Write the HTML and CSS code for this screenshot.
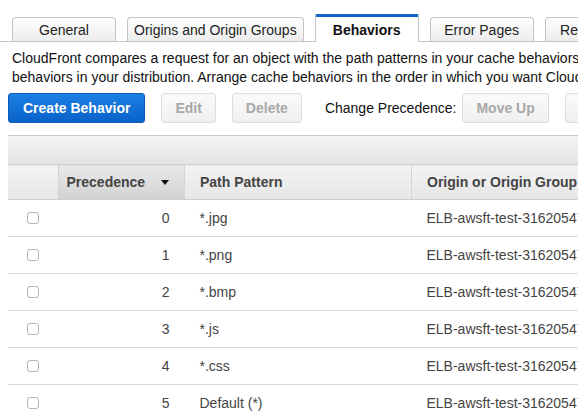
FILE: index.html
```html
<!DOCTYPE html>
<html lang="en">
<head>
  <meta charset="UTF-8">
  <title>CloudFront Distribution - Behaviors</title>
  <link rel="stylesheet" href="styles.css">
</head>
<body>

  <div class="tabs">
    <div class="tab">General</div>
    <div class="tab">Origins and Origin Groups</div>
    <div class="tab active">Behaviors</div>
    <div class="tab">Error Pages</div>
    <div class="tab">Restrictions</div>
    <div class="tab">Invalidations</div>
    <div class="tab">Tags</div>
  </div>

  <p class="intro">
    CloudFront compares a request for an object with the path patterns in your cache behaviors based on the order of the cache<br>
    behaviors in your distribution. Arrange cache behaviors in the order in which you want CloudFront to evaluate them.
  </p>

  <div class="toolbar">
    <button class="btn primary">Create Behavior</button>
    <button class="btn" disabled>Edit</button>
    <button class="btn" disabled>Delete</button>
    <span class="label">Change Precedence:</span>
    <button class="btn" disabled>Move Up</button>
    <button class="btn" disabled>Move Down</button>
  </div>

  <div class="table-wrap">
    <div class="table-top"></div>
    <table id="behaviors">
      <thead>
        <tr>
          <th class="col-check"></th>
          <th class="col-prec sorted">Precedence <span class="caret"></span></th>
          <th class="col-path">Path Pattern</th>
          <th class="col-origin">Origin or Origin Group</th>
          <th class="col-policy">Viewer Protocol Policy</th>
        </tr>
      </thead>
      <tbody></tbody>
    </table>
  </div>

  <script>
    const behaviors = ["*.jpg", "*.png", "*.bmp", "*.js", "*.css", "Default (*)"];
    const tbody = document.querySelector("#behaviors tbody");

    behaviors.forEach((pattern, i) => {
      const tr = document.createElement("tr");
      tr.innerHTML =
        '<td class="col-check"><input type="checkbox"></td>' +
        '<td class="num">' + i + '</td>' +
        '<td>' + pattern + '</td>' +
        '<td>ELB-awsft-test-316205472.us-east-1.elb.amazonaws.com</td>' +
        '<td>HTTP and HTTPS</td>';
      tbody.appendChild(tr);
    });
  </script>

</body>
</html>
```

FILE: styles.css
```css
html {
  overflow: hidden;
}
body {
  margin: 0;
  width: 1100px;
  font-family: "Liberation Sans", Arial, sans-serif;
  font-size: 14px;
  color: #333;
  background: #fff;
}

/* tabs */
.tabs {
  display: flex;
  align-items: flex-end;
  gap: 11px;
  padding: 14px 0 0 12px;
  border-bottom: 1px solid #c4c4c4;
  height: 27px;
}
.tab {
  box-sizing: border-box;
  min-width: 104px;
  height: 24px;
  padding: 4px 6px 0;
  text-align: center;
  color: #222;
  border: 1px solid #c4c4c4;
  border-bottom: none;
  border-radius: 4px 4px 0 0;
  background: linear-gradient(to bottom, #fff, #ececec);
}
.tab.active {
  height: 28px;
  margin-bottom: -1px;
  padding-top: 5px;
  font-weight: bold;
  color: #111;
  background: #fff;
  border-top: 3px solid #1166cc;
  border-radius: 2px 2px 0 0;
}

.intro {
  margin: 7px 0 0 12px;
  line-height: 19px;
  color: #111;
}

/* buttons */
.toolbar {
  display: flex;
  align-items: center;
  margin: 6px 0 0 8px;
  height: 30px;
}
.btn {
  box-sizing: border-box;
  height: 30px;
  padding: 0 13px;
  margin-right: 16px;
  font-family: inherit;
  font-size: 14px;
  font-weight: bold;
  color: #a8a8a8;
  background: linear-gradient(to bottom, #fafafa, #f0f0f0);
  border: 1px solid #ddd;
  border-radius: 3px;
}
.btn.primary {
  padding: 0 14px;
  color: #fff;
  background: linear-gradient(to bottom, #1c7fe4, #0862c9);
  border-color: #0b5bb8;
}
.label {
  margin: 0 6px 0 7px;
  color: #111;
  white-space: nowrap;
}

/* table */
.table-wrap {
  margin: 12px 0 0 8px;
}
.table-top {
  height: 28px;
  border-top: 1px solid #c8c8c8;
  background: linear-gradient(to bottom, #f3f3f3, #e4e4e4);
}
#behaviors {
  border-collapse: collapse;
  width: 1000px;
}
#behaviors th {
  height: 34px;
  padding: 0 15px;
  text-align: left;
  white-space: nowrap;
  font-weight: bold;
  color: #444;
  border-top: 1px solid #cfcfcf;
  border-bottom: 1px solid #cfcfcf;
  border-left: 1px solid #d4d4d4;
  background: linear-gradient(to bottom, #f3f3f3, #e6e6e6);
}
#behaviors th.col-check {
  border-left: none;
}
#behaviors th.sorted {
  padding-left: 8px;
  background: linear-gradient(to bottom, #e9e9e9, #d2d2d2);
}
.caret {
  display: inline-block;
  margin-left: 12px;
  border-left: 4px solid transparent;
  border-right: 4px solid transparent;
  border-top: 5px solid #111;
  vertical-align: 2px;
}
.col-check {
  width: 50px;
  box-sizing: border-box;
}
.col-prec {
  width: 125px;
  box-sizing: border-box;
}
.col-path {
  width: 227px;
  box-sizing: border-box;
}
.col-origin {
  width: 330px;
}
#behaviors td {
  height: 36px;
  padding: 0 15px;
  white-space: nowrap;
  color: #444;
  border-bottom: 1px solid #d8d8d8;
}
#behaviors td.col-check {
  padding: 0 0 0 19px;
}
#behaviors td.num {
  text-align: right;
}
input[type="checkbox"] {
  appearance: none;
  display: block;
  width: 12px;
  height: 12px;
  margin: 0;
  border: 1px solid #b5b5b5;
  border-radius: 3px;
  background: #fff;
}
```
